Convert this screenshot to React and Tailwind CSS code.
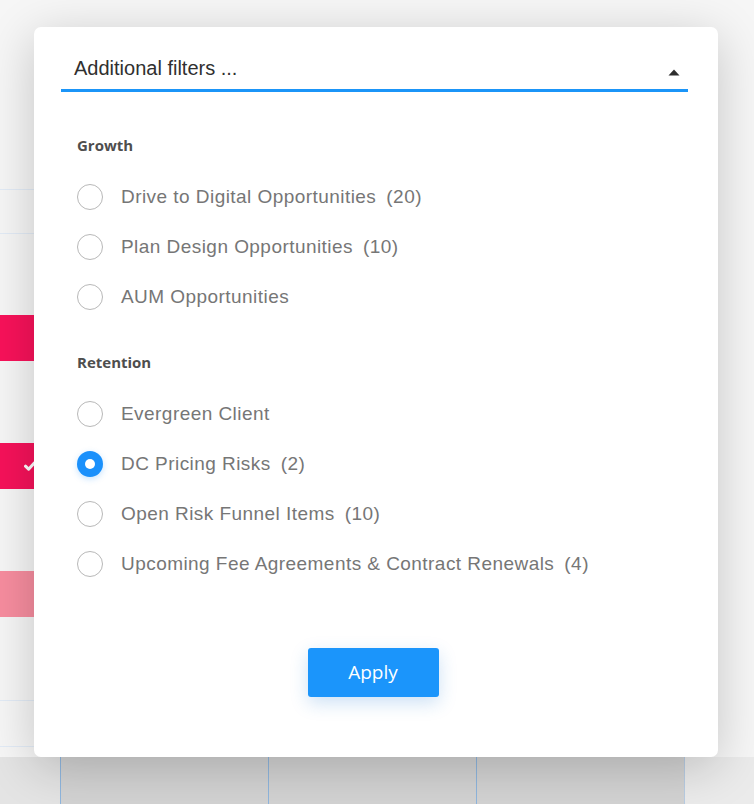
import { useState } from 'react';

const groups = [
  {
    title: 'Growth',
    items: [
      { id: 'd2d', label: 'Drive to Digital Opportunities', count: 20 },
      { id: 'plan', label: 'Plan Design Opportunities', count: 10 },
      { id: 'aum', label: 'AUM Opportunities' },
    ],
  },
  {
    title: 'Retention',
    items: [
      { id: 'evergreen', label: 'Evergreen Client' },
      { id: 'dc', label: 'DC Pricing Risks', count: 2 },
      { id: 'risk', label: 'Open Risk Funnel Items', count: 10 },
      { id: 'fee', label: 'Upcoming Fee Agreements & Contract Renewals', count: 4 },
    ],
  },
];

const Radio = ({ checked }) => (
  <span
    className={
      checked
        ? 'flex h-[26px] w-[26px] shrink-0 items-center justify-center rounded-full bg-[#1a90fb] shadow-[0_2px_6px_rgba(26,144,251,0.25)]'
        : 'h-[26px] w-[26px] shrink-0 rounded-full border-[1.5px] border-[#b8b8b8] bg-white'
    }
  >
    {checked && <span className="h-[10px] w-[10px] rounded-full bg-white" />}
  </span>
);

// the page behind the modal: only its left edge and bottom row show
const Backdrop = () => (
  <div className="flex flex-col">
    <div className="flex">
      <div className="flex w-[60px] flex-col">
        <div className="h-[189px]" />
        <div className="h-[44px] border-t border-[#e2ebf6]" />
        <div className="h-[82px] border-t border-[#e2ebf6]" />
        <div className="h-[46px] bg-[#f8125a]" />
        <div className="h-[82px]" />
        <div className="flex h-[46px] items-center bg-[#f6125a] pl-[24px]">
          <svg width="12" height="10" viewBox="0 0 12 10" fill="none">
            <path d="M1.5 5.2 4.6 8.2 10.5 1.8" stroke="white" strokeWidth="3" strokeLinecap="round" strokeLinejoin="round" />
          </svg>
        </div>
        <div className="h-[82px]" />
        <div className="h-[46px] bg-[#f78d9f]" />
        <div className="h-[83px]" />
        <div className="h-[46px] border-t border-[#e2ebf6]" />
        <div className="h-[11px] border-t border-[#e2ebf6]" />
      </div>
      <div className="flex-1" />
    </div>
    <div className="grid h-[60px] grid-cols-[61px_208px_208px_208px_1fr] bg-[#d3d3d3]">
      <div className="border-r border-[#8fb6de] bg-[#e4e4e4]" />
      <div className="border-r border-[#8fb6de]" />
      <div className="border-r border-[#8fb6de]" />
      <div className="border-r border-[#b9cde3]" />
      <div className="bg-[#ebebeb]" />
    </div>
  </div>
);

export default function App() {
  const [selected, setSelected] = useState('dc');

  return (
    <div className="relative h-[804px] w-full overflow-hidden bg-[#f6f6f6]">
      <Backdrop />

      <div className="absolute left-[34px] top-[27px] flex h-[730px] w-[684px] flex-col rounded-[7px] bg-white shadow-[0_10px_50px_rgba(0,0,0,0.2)]">
        <div className="ml-[27px] mr-[30px] mt-[28px] flex h-[37px] items-start justify-between border-b-[3px] border-[#1b95f8] pl-[13px] pr-[8px]">
          <span className="font-['Liberation_Sans',Arial,sans-serif] text-[20px] leading-[26px] text-[#303030]">
            Additional filters ...
          </span>
          <svg className="mt-[14px]" width="12" height="7" viewBox="0 0 12 7">
            <path d="M6 0.5 11.5 6.5H0.5Z" fill="#2e2e2e" />
          </svg>
        </div>

        <div className="flex flex-col gap-[29px] pl-[43px] pt-[42px]">
          {groups.map(group => (
            <div key={group.title} className="flex flex-col">
              <h3 className="mb-[16px] font-['Open_Sans',sans-serif] text-[15px] font-bold leading-[22px] text-[#4e4e4e]">
                {group.title}
              </h3>
              <div className="flex flex-col">
                {group.items.map(item => (
                  <button
                    key={item.id}
                    type="button"
                    onClick={() => setSelected(item.id)}
                    className="flex h-[50px] items-center gap-[18px] text-left"
                  >
                    <Radio checked={selected === item.id} />
                    <span className="font-['Liberation_Sans',Arial,sans-serif] text-[19px] tracking-[0.45px] text-[#767676]">
                      {item.label}
                      {item.count !== undefined && <span className="ml-[10px]">({item.count})</span>}
                    </span>
                  </button>
                ))}
              </div>
            </div>
          ))}
        </div>

        <div className="mt-auto mb-[60px] flex justify-center pr-[6px]">
          <button
            type="button"
            className="h-[49px] w-[131px] rounded-[3px] bg-[#1b95fb] font-['Open_Sans',sans-serif] text-[19px] text-white shadow-[0_6px_18px_rgba(27,120,210,0.22)]"
          >
            Apply
          </button>
        </div>
      </div>
    </div>
  );
}
